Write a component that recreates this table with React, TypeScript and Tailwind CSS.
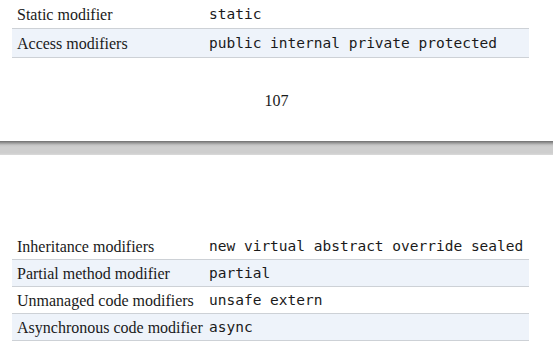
const serif = "font-['Liberation_Serif',serif] text-[16px] text-[#1a1a1a]";
const mono = "font-['DejaVu_Sans_Mono',monospace] text-[14.5px] text-[#1a1a1a]";

type Row = [string, string];

function ModTable({ rows, rowH, className }: { rows: Row[]; rowH: string; className?: string }) {
  return (
    <div className={"mx-[12px] w-[517px] " + (className ?? "")}>
      {rows.map(([label, code], i) => (
        <div
          key={label}
          className={
            "flex items-center pt-[2px] border-b border-[#cdd1d6] " +
            rowH +
            (i % 2 === 1 ? " bg-[#eef3fa]" : " bg-white")
          }
        >
          <div className={"w-[194px] pl-[5px] " + serif}>{label}</div>
          <div className={"flex-1 pl-[3px] whitespace-pre " + mono}>{code}</div>
        </div>
      ))}
    </div>
  );
}

export default function App() {
  return (
    <div className="w-[553px] h-[354px] bg-white overflow-hidden flex flex-col">
      <ModTable
        rowH="h-[29px]"
        rows={[
          ["Static modifier", "static"],
          ["Access modifiers", "public internal private protected"],
        ]}
      />
      <div className={"mt-[31px] leading-[24px] text-center " + serif}>107</div>
      <div className="mt-[28px] h-[14px] bg-[linear-gradient(to_bottom,#6e6e6e_0px,#9a9a9a_2px,#c4c4c4_4px,#cecece_6px,#cecece_12px,#dadada_14px)]" />
      <ModTable
        className="mt-[78px]"
        rowH="h-[27px]"
        rows={[
          ["Inheritance modifiers", "new virtual abstract override sealed"],
          ["Partial method modifier", "partial"],
          ["Unmanaged code modifiers", "unsafe extern"],
          ["Asynchronous code modifier", "async"],
        ]}
      />
    </div>
  );
}
